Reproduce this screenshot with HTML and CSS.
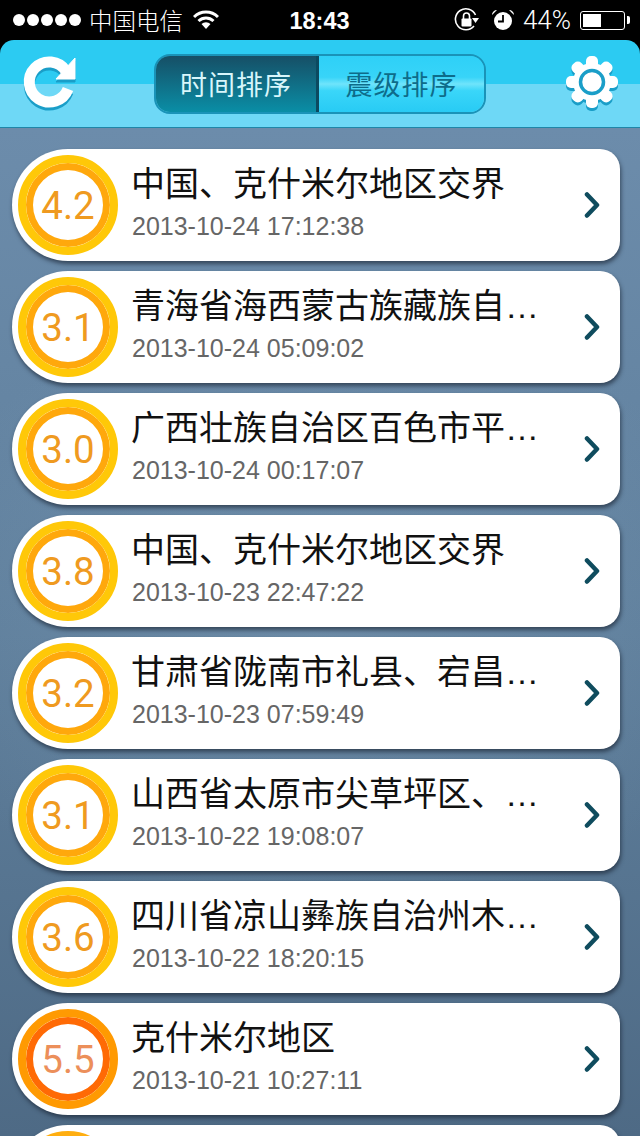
FILE: index.html
```html
<!DOCTYPE html>
<html lang="zh-CN">
  <head>
    <meta charset="UTF-8" />
    <meta name="viewport" content="width=device-width, initial-scale=1.0" />
    <title>地震列表</title>
    <link rel="stylesheet" href="styles.css">
  </head>
  <body>
    <svg class="defs" width="0" height="0">
      <defs>
        <g id="chevron">
          <path d="M3 3.5 L13 14 L3 24.5" fill="none" stroke-width="4.5" stroke-linecap="round" stroke-linejoin="round" />
        </g>
        <g id="refresh">
          <path d="M46 17 A20 20 0 1 0 48 35" fill="none" stroke-width="11" />
          <path d="M55 4 V25 H36 Z" />
        </g>
        <g id="gear">
          <circle cx="30" cy="28" r="19" />
          <g id="teeth">
            <rect x="24" y="2" width="12" height="52" rx="5" />
            <rect x="24" y="2" width="12" height="52" rx="5" transform="rotate(45 30 28)" />
            <rect x="24" y="2" width="12" height="52" rx="5" transform="rotate(90 30 28)" />
            <rect x="24" y="2" width="12" height="52" rx="5" transform="rotate(135 30 28)" />
          </g>
        </g>
      </defs>
    </svg>

    <div class="status-bar">
      <div class="status-left">
        <span class="dots"><i></i><i></i><i></i><i></i><i></i></span>
        <span class="carrier">中国电信</span>
        <svg class="wifi" width="26" height="20" viewBox="0 0 26 20">
          <path d="M1 7 A17 17 0 0 1 25 7" fill="none" stroke="#fff" stroke-width="3" />
          <path d="M5.5 11 A11 11 0 0 1 20.5 11" fill="none" stroke="#fff" stroke-width="3" />
          <path d="M13 19 L8.5 14 A6.5 6.5 0 0 1 17.5 14 Z" fill="#fff" />
        </svg>
      </div>
      <div class="status-time">18:43</div>
      <div class="status-right">
        <svg width="26" height="26" viewBox="0 0 26 26">
          <path d="M20 19 A10.5 10.5 0 1 1 21.5 8" fill="none" stroke="#fff" stroke-width="1.6" />
          <path d="M18 11 H25 L21.5 16 Z" fill="#fff" />
          <rect x="7.5" y="11.5" width="10" height="8" rx="1" fill="#fff" />
          <path d="M9.5 12 V9 A3 3 0 0 1 15.5 9 V12" fill="none" stroke="#fff" stroke-width="1.6" />
        </svg>
        <svg class="alarm" width="24" height="24" viewBox="0 0 24 24">
          <circle cx="12" cy="13" r="9" fill="#fff" />
          <path d="M12 7 V13.5 H7" fill="none" stroke="#000" stroke-width="1.8" />
          <path d="M1 7 A5 5 0 0 1 6 2 Z M23 7 A5 5 0 0 0 18 2 Z" fill="#fff" />
        </svg>
        <span class="battery-pct">44%</span>
        <span class="battery"><span class="battery-fill"></span></span>
      </div>
    </div>

    <div class="nav">
      <svg class="nav-icon refresh" width="60" height="60" viewBox="-2 0 60 60">
        <use href="#refresh" y="3" stroke="#1a9ec8" fill="#1a9ec8" />
        <use href="#refresh" stroke="#fff" fill="#fff" />
      </svg>
      <div class="segment">
        <div class="segment-item active">时间排序</div>
        <div class="segment-item">震级排序</div>
      </div>
      <svg class="nav-icon gear" width="60" height="60" viewBox="0 0 60 60">
        <use href="#gear" y="3" fill="#1a9ec8" />
        <use href="#gear" fill="#fff" />
        <circle cx="30" cy="28" r="11.5" fill="#fff" stroke="#1a9ec8" stroke-width="3.5" />
      </svg>
    </div>

    <div class="list">
      <div class="card">
        <div class="mag">4.2</div>
        <div class="info">
          <div class="title">中国、克什米尔地区交界</div>
          <div class="date">2013-10-24 17:12:38</div>
        </div>
        <svg class="arrow" width="16" height="28" viewBox="0 0 16 28"><use href="#chevron" stroke="#0f4c5e" /></svg>
      </div>
      <div class="card">
        <div class="mag">3.1</div>
        <div class="info">
          <div class="title">青海省海西蒙古族藏族自治州茫崖</div>
          <div class="date">2013-10-24 05:09:02</div>
        </div>
        <svg class="arrow" width="16" height="28" viewBox="0 0 16 28"><use href="#chevron" stroke="#0f4c5e" /></svg>
      </div>
      <div class="card">
        <div class="mag">3.0</div>
        <div class="info">
          <div class="title">广西壮族自治区百色市平果县附近</div>
          <div class="date">2013-10-24 00:17:07</div>
        </div>
        <svg class="arrow" width="16" height="28" viewBox="0 0 16 28"><use href="#chevron" stroke="#0f4c5e" /></svg>
      </div>
      <div class="card">
        <div class="mag">3.8</div>
        <div class="info">
          <div class="title">中国、克什米尔地区交界</div>
          <div class="date">2013-10-23 22:47:22</div>
        </div>
        <svg class="arrow" width="16" height="28" viewBox="0 0 16 28"><use href="#chevron" stroke="#0f4c5e" /></svg>
      </div>
      <div class="card">
        <div class="mag">3.2</div>
        <div class="info">
          <div class="title">甘肃省陇南市礼县、宕昌县交界处</div>
          <div class="date">2013-10-23 07:59:49</div>
        </div>
        <svg class="arrow" width="16" height="28" viewBox="0 0 16 28"><use href="#chevron" stroke="#0f4c5e" /></svg>
      </div>
      <div class="card">
        <div class="mag">3.1</div>
        <div class="info">
          <div class="title">山西省太原市尖草坪区、阳曲县交界</div>
          <div class="date">2013-10-22 19:08:07</div>
        </div>
        <svg class="arrow" width="16" height="28" viewBox="0 0 16 28"><use href="#chevron" stroke="#0f4c5e" /></svg>
      </div>
      <div class="card">
        <div class="mag">3.6</div>
        <div class="info">
          <div class="title">四川省凉山彝族自治州木里藏族自治县</div>
          <div class="date">2013-10-22 18:20:15</div>
        </div>
        <svg class="arrow" width="16" height="28" viewBox="0 0 16 28"><use href="#chevron" stroke="#0f4c5e" /></svg>
      </div>
      <div class="card">
        <div class="mag strong">5.5</div>
        <div class="info">
          <div class="title">克什米尔地区</div>
          <div class="date">2013-10-21 10:27:11</div>
        </div>
        <svg class="arrow" width="16" height="28" viewBox="0 0 16 28"><use href="#chevron" stroke="#0f4c5e" /></svg>
      </div>
      <div class="card">
        <div class="mag medium"></div>
      </div>
    </div>
  </body>
</html>
```

FILE: styles.css
```css
* {
  margin: 0;
  padding: 0;
  box-sizing: border-box;
}

html,
body {
  background: #000;
}

body {
  width: 640px;
  height: 1136px;
  overflow: hidden;
  display: flex;
  flex-direction: column;
  font-family: "Liberation Sans", "Noto Sans CJK SC", sans-serif;
}

.defs {
  display: none;
}

.status-bar {
  height: 40px;
  flex-shrink: 0;
  display: grid;
  grid-template-columns: 1fr auto 1fr;
  align-items: center;
  color: #fff;
  padding: 0 11px 0 13px;
}

.status-left {
  display: flex;
  align-items: center;
}

.dots {
  display: flex;
  gap: 2px;
}

.dots i {
  width: 12px;
  height: 12px;
  border-radius: 50%;
  background: #fff;
}

.carrier {
  margin-left: 8px;
  font-size: 23.5px;
  font-weight: 300;
}

.wifi {
  margin-left: 10px;
}

.status-time {
  margin: 2px 3px 0 0;
  font-size: 23.5px;
  font-weight: 700;
}

.status-right {
  display: flex;
  align-items: center;
  justify-content: flex-end;
}

.alarm {
  margin-left: 11px;
}

.battery-pct {
  margin-left: 8px;
  font-family: Roboto, sans-serif;
  font-size: 26px;
  font-weight: 300;
}

.battery {
  position: relative;
  width: 45px;
  height: 19px;
  margin-left: 9px;
  margin-right: 4px;
  padding: 2px;
  border: 1.5px solid #fff;
  border-radius: 3px;
}

.battery::after {
  content: "";
  position: absolute;
  right: -6px;
  top: 4px;
  width: 3px;
  height: 8px;
  background: #fff;
  border-radius: 0 2px 2px 0;
}

.battery-fill {
  display: block;
  width: 18px;
  height: 100%;
  background: #fff;
}

.nav {
  height: 88px;
  flex-shrink: 0;
  display: flex;
  align-items: flex-start;
  justify-content: space-between;
  padding: 14px 18px 0 18px;
  border-radius: 14px 14px 0 0;
  border-bottom: 1px solid #1f86a8;
  background: linear-gradient(#2ccbf2 0, #2ccbf2 44px, #6ed8f6 44px, #6ed8f6 100%);
}

.nav-icon {
  flex-shrink: 0;
}

.segment {
  width: 332px;
  height: 60px;
  display: flex;
  border: 2px solid #1a93b8;
  border-radius: 16px;
  overflow: hidden;
  font-size: 27px;
  font-family: "Noto Sans CJK SC", sans-serif;
}

.segment-item {
  flex: 1;
  display: flex;
  align-items: center;
  justify-content: center;
  padding-bottom: 2px;
  color: #0e6c8a;
  letter-spacing: 1px;
  background: linear-gradient(#2ed0f7 0, #38d4f8 38%, #6fe4fb 50%, #3ad6f9 62%, #28cbf4 100%);
}

.segment-item.active {
  flex: none;
  width: 163px;
  color: #d8f6fb;
  background: linear-gradient(#164f66, #0a8ea6);
  border-right: 3px solid #0c4a60;
}

.list {
  flex: 1;
  display: flex;
  flex-direction: column;
  gap: 10px;
  padding: 21px 20px 0 12px;
  overflow: hidden;
  background:
    radial-gradient(ellipse 420px 330px at 320px 490px, rgba(135, 165, 190, 0.35), rgba(135, 165, 190, 0)),
    linear-gradient(#6c8cab, #5f7f9c 50%, #4e6a85);
}

.card {
  height: 112px;
  flex-shrink: 0;
  display: flex;
  align-items: center;
  padding-left: 6px;
  background: #fff;
  border-radius: 56px 20px 20px 56px;
  box-shadow: 1px 3px 4px rgba(25, 35, 50, 0.65);
}

.mag {
  width: 100px;
  height: 100px;
  flex-shrink: 0;
  display: flex;
  align-items: center;
  justify-content: center;
  border: 8px solid #ffc808;
  border-radius: 50%;
  box-shadow: inset 0 0 0 7px #ffa80c;
  color: #ef9a20;
  font-family: Roboto, sans-serif;
  font-size: 38.5px;
}

.mag.strong {
  border-color: #ff9a02;
  box-shadow: inset 0 0 0 7px #ff6a05;
  color: #ec8f5a;
}

.mag.medium {
  border-color: #ffae10;
  box-shadow: inset 0 0 0 7px #ff8a08;
}

.info {
  width: 410px;
  margin-left: 13px;
  padding-bottom: 7px;
}

.title {
  color: #111;
  font-size: 34px;
  line-height: 44px;
  white-space: nowrap;
  overflow: hidden;
  text-overflow: ellipsis;
}

.date {
  margin: 5px 0 0 1px;
  color: #666;
  font-size: 25px;
  line-height: 30px;
}

.arrow {
  margin-left: 43px;
  flex-shrink: 0;
}
```
